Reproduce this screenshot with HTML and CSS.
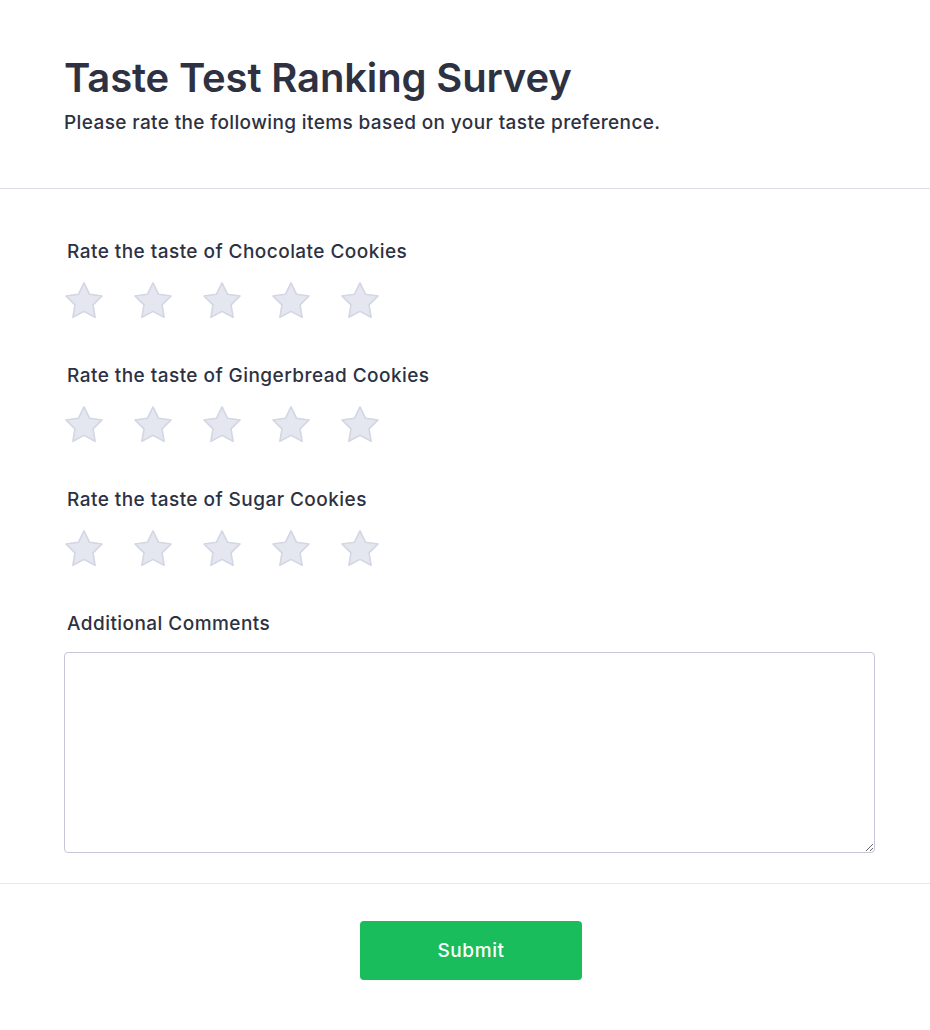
FILE: index.html
```html
<!DOCTYPE html>
<html lang="en">
<head>
<meta charset="utf-8">
<title>Taste Test Ranking Survey</title>
<link rel="stylesheet" href="styles.css">
</head>
<body>
<header class="header">
  <h1 class="title">Taste Test Ranking Survey</h1>
  <p class="subtitle">Please rate the following items based on your taste preference.</p>
</header>
<form class="form">
  <div class="question">
    <label class="label">Rate the taste of Chocolate Cookies</label>
    <div class="stars">
      <svg class="star" viewBox="0 0 24 24"><path d="M12 2.6l2.9 5.9 6.5.9-4.7 4.6 1.1 6.5L12 17.4l-5.8 3.1 1.1-6.5-4.7-4.6 6.5-.9z"/></svg>
      <svg class="star" viewBox="0 0 24 24"><path d="M12 2.6l2.9 5.9 6.5.9-4.7 4.6 1.1 6.5L12 17.4l-5.8 3.1 1.1-6.5-4.7-4.6 6.5-.9z"/></svg>
      <svg class="star" viewBox="0 0 24 24"><path d="M12 2.6l2.9 5.9 6.5.9-4.7 4.6 1.1 6.5L12 17.4l-5.8 3.1 1.1-6.5-4.7-4.6 6.5-.9z"/></svg>
      <svg class="star" viewBox="0 0 24 24"><path d="M12 2.6l2.9 5.9 6.5.9-4.7 4.6 1.1 6.5L12 17.4l-5.8 3.1 1.1-6.5-4.7-4.6 6.5-.9z"/></svg>
      <svg class="star" viewBox="0 0 24 24"><path d="M12 2.6l2.9 5.9 6.5.9-4.7 4.6 1.1 6.5L12 17.4l-5.8 3.1 1.1-6.5-4.7-4.6 6.5-.9z"/></svg>
    </div>
  </div>
  <div class="question">
    <label class="label">Rate the taste of Gingerbread Cookies</label>
    <div class="stars">
      <svg class="star" viewBox="0 0 24 24"><path d="M12 2.6l2.9 5.9 6.5.9-4.7 4.6 1.1 6.5L12 17.4l-5.8 3.1 1.1-6.5-4.7-4.6 6.5-.9z"/></svg>
      <svg class="star" viewBox="0 0 24 24"><path d="M12 2.6l2.9 5.9 6.5.9-4.7 4.6 1.1 6.5L12 17.4l-5.8 3.1 1.1-6.5-4.7-4.6 6.5-.9z"/></svg>
      <svg class="star" viewBox="0 0 24 24"><path d="M12 2.6l2.9 5.9 6.5.9-4.7 4.6 1.1 6.5L12 17.4l-5.8 3.1 1.1-6.5-4.7-4.6 6.5-.9z"/></svg>
      <svg class="star" viewBox="0 0 24 24"><path d="M12 2.6l2.9 5.9 6.5.9-4.7 4.6 1.1 6.5L12 17.4l-5.8 3.1 1.1-6.5-4.7-4.6 6.5-.9z"/></svg>
      <svg class="star" viewBox="0 0 24 24"><path d="M12 2.6l2.9 5.9 6.5.9-4.7 4.6 1.1 6.5L12 17.4l-5.8 3.1 1.1-6.5-4.7-4.6 6.5-.9z"/></svg>
    </div>
  </div>
  <div class="question">
    <label class="label">Rate the taste of Sugar Cookies</label>
    <div class="stars">
      <svg class="star" viewBox="0 0 24 24"><path d="M12 2.6l2.9 5.9 6.5.9-4.7 4.6 1.1 6.5L12 17.4l-5.8 3.1 1.1-6.5-4.7-4.6 6.5-.9z"/></svg>
      <svg class="star" viewBox="0 0 24 24"><path d="M12 2.6l2.9 5.9 6.5.9-4.7 4.6 1.1 6.5L12 17.4l-5.8 3.1 1.1-6.5-4.7-4.6 6.5-.9z"/></svg>
      <svg class="star" viewBox="0 0 24 24"><path d="M12 2.6l2.9 5.9 6.5.9-4.7 4.6 1.1 6.5L12 17.4l-5.8 3.1 1.1-6.5-4.7-4.6 6.5-.9z"/></svg>
      <svg class="star" viewBox="0 0 24 24"><path d="M12 2.6l2.9 5.9 6.5.9-4.7 4.6 1.1 6.5L12 17.4l-5.8 3.1 1.1-6.5-4.7-4.6 6.5-.9z"/></svg>
      <svg class="star" viewBox="0 0 24 24"><path d="M12 2.6l2.9 5.9 6.5.9-4.7 4.6 1.1 6.5L12 17.4l-5.8 3.1 1.1-6.5-4.7-4.6 6.5-.9z"/></svg>
    </div>
  </div>
  <div class="comments">
    <label class="label">Additional Comments</label>
    <textarea class="textarea"></textarea>
  </div>
</form>
<footer class="footer">
  <button class="submit" type="button">Submit</button>
</footer>
</body>
</html>
```

FILE: styles.css
```css
* { box-sizing: border-box; }
html, body { margin: 0; padding: 0; background: #fff; }
body {
  font-family: Inter, "Noto Sans", sans-serif;
  color: #2d3142;
}
.header {
  padding: 54px 64px 51px;
  border-bottom: 1px solid #dcdbe8;
}
.title {
  margin: 0;
  font-size: 40px;
  line-height: 48px;
  font-weight: 600;
  letter-spacing: -0.15px;
}
.subtitle {
  margin: 7px 0 0;
  font-size: 19px;
  line-height: 28px;
  font-weight: 500;
  letter-spacing: 0.38px;
}
.form {
  padding: 51px 55px 30px 64px;
  display: flex;
  flex-direction: column;
}
.question {
  display: flex;
  flex-direction: column;
  height: 124px;
}
.label {
  display: block;
  margin-left: 3px;
  font-size: 19px;
  line-height: 24px;
  font-weight: 500;
  letter-spacing: 0.45px;
}
.stars {
  display: flex;
  gap: 23px;
  margin-top: 14px;
  margin-left: -3px;
}
.star {
  width: 46px;
  height: 46px;
  fill: #e5e7f0;
  stroke: #d3d6e3;
  stroke-width: 0.85;
  stroke-linejoin: round;
}
.comments {
  display: flex;
  flex-direction: column;
}
.textarea {
  margin-top: 16px;
  width: 100%;
  height: 201px;
  border: 1px solid #c6c6d8;
  border-radius: 4px;
  resize: vertical;
  font-family: inherit;
}
.footer {
  border-top: 1px solid #e5e8f2;
  display: flex;
  justify-content: center;
  padding: 37px 0 50px 12px;
}
.submit {
  width: 222px;
  height: 59px;
  border: none;
  border-radius: 4px;
  background: #19bd5b;
  color: #fff;
  font-family: inherit;
  font-size: 19px;
  font-weight: 500;
  letter-spacing: 0.6px;
}
```
